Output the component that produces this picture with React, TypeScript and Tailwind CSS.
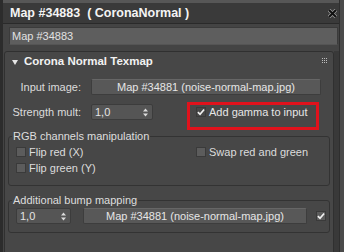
import type { ReactNode } from "react";

function CheckMark() {
  return (
    <svg width="9" height="8" viewBox="0 0 9 8" className="block">
      <path d="M1 4.2 L3.4 6.6 L8 1.2" fill="none" stroke="#f2f2f2" strokeWidth="1.9" />
    </svg>
  );
}

function CheckBox({ checked = false, dark = false }: { checked?: boolean; dark?: boolean }) {
  return (
    <div
      className={`flex h-[10px] w-[10px] shrink-0 items-center justify-center border border-[#3a3a3a] ${dark ? "bg-[#474747]" : "bg-[#5c5c5c]"}`}
    >
      {checked && <CheckMark />}
    </div>
  );
}

function Spinner({ value, width }: { value: string; width: string }) {
  return (
    <div
      className={`flex h-[16px] ${width} items-center justify-between rounded-[2px] border border-[#3c3c3c] bg-[#555555] pl-[3px] pr-[4px] text-[#e4e4e4]`}
    >
      <span>{value}</span>
      <svg width="5" height="9" viewBox="0 0 5 9" className="block">
        <path d="M0 3.5 L2.5 0.5 L5 3.5 Z M0 5.5 L2.5 8.5 L5 5.5 Z" fill="#dcdcdc" />
      </svg>
    </div>
  );
}

function MapButton({ width }: { width: string }) {
  return (
    <div
      className={`flex h-[16px] ${width} items-center justify-center rounded-[2px] border border-[#3d3d3d] border-t-[#666] bg-[#585858] text-[#e6e6e6]`}
    >
      Map #34881 (noise-normal-map.jpg)
    </div>
  );
}

function Group({ title, children, className = "" }: { title: string; children: ReactNode; className?: string }) {
  return (
    <fieldset className={`mx-[3px] rounded-[3px] border border-[#333333] ${className}`}>
      <legend className="ml-[3px] px-[1px] leading-[13px] text-[#dedede]">{title}</legend>
      {children}
    </fieldset>
  );
}

export default function App() {
  return (
    <div className="flex h-[252px] w-[344px] overflow-hidden bg-[#4a4a4a] font-['Liberation_Sans',Arial,sans-serif] text-[11px] text-[#dcdcdc]">
      <div className="flex w-[339px] shrink-0 flex-col border-l-[3px] border-[#2c2c2c] bg-[#444444]">
        <div className="h-[3px] shrink-0 bg-[#575757]" />
        <div className="flex h-[21px] shrink-0 items-center justify-between border-b border-[#2a2a2a] bg-[#3a3a3a] pl-[7px] pr-[2px]">
          <span className="text-[12.5px] font-bold text-[#f4f4f4]">Map #34883&nbsp;&nbsp;( CoronaNormal )</span>
          <svg width="9" height="9" viewBox="0 0 9 9" className="block">
            <path d="M1 1 L8 8 M8 1 L1 8" stroke="#9a9a9a" strokeWidth="3.6" />
            <path d="M1 1 L8 8 M8 1 L1 8" stroke="#111" strokeWidth="2" />
          </svg>
        </div>

        <div className="ml-[6px] mr-[1px] mt-[3px] flex h-[18px] shrink-0 items-center border border-[#3b3b3b] border-b-[#555] bg-[#5e5e5e] pl-[2px] text-[#e2e2e2]">
          Map #34883
        </div>

        <div className="mt-[6px] flex min-h-0 flex-1 overflow-hidden">
          <div className="ml-[1px] flex-1">
            <div className="relative h-[230px] rounded-[3px] border border-[#303030] bg-[#474747]">
              <div className="flex h-[20px] items-center pl-[7px]">
                <svg width="6" height="5" viewBox="0 0 6 5" className="block">
                  <path d="M0 0 L6 0 L3 5 Z" fill="#e6e6e6" />
                </svg>
                <span className="ml-[6px] text-[11.5px] font-bold text-[#f2f2f2]">Corona Normal Texmap</span>
              </div>
              <div className="absolute right-[6px] top-[6px] grid grid-cols-3 gap-[1px]">
                {Array.from({ length: 9 }).map((_, i) => (
                  <div key={i} className="h-[1px] w-[1px] bg-[#bdbdbd]" />
                ))}
              </div>

              <div className="mt-[7px] flex h-[16px] items-center">
                <div className="w-[76px] text-right">Input image:</div>
                <div className="ml-[10px]">
                  <MapButton width="w-[230px]" />
                </div>
              </div>

              <div className="relative mt-[9px] flex h-[16px] items-center">
                <div className="w-[76px] text-right">Strength mult:</div>
                <div className="ml-[10px]">
                  <Spinner value="1,0" width="w-[62px]" />
                </div>
                <div className="ml-[43px] flex items-center gap-[3px]">
                  <CheckBox checked dark />
                  <span className="text-[#e6e6e6]">Add gamma to input</span>
                </div>
                <div className="absolute left-[182px] top-[-2px] h-[28px] w-[132px] border-[3px] border-[#e0121c]" />
              </div>

              <Group title="RGB channels manipulation" className="mt-[10px] pb-[9px]">
                <div className="mt-[1px] flex">
                  <div className="flex w-[187px] flex-col pl-[7px]">
                    <div className="flex h-[16px] items-center gap-[3px]">
                      <CheckBox />
                      <span>Flip red (X)</span>
                    </div>
                    <div className="flex h-[16px] items-center gap-[3px]">
                      <CheckBox />
                      <span>Flip green (Y)</span>
                    </div>
                  </div>
                  <div className="flex h-[16px] items-center gap-[3px]">
                    <CheckBox />
                    <span>Swap red and green</span>
                  </div>
                </div>
              </Group>

              <Group title="Additional bump mapping" className="mt-[8px] pb-[8px]">
                <div className="mt-[1px] flex items-center pl-[7px]">
                  <Spinner value="1,0" width="w-[55px]" />
                  <div className="ml-[12px]">
                    <MapButton width="w-[224px]" />
                  </div>
                  <div className="ml-[9px]">
                    <CheckBox checked />
                  </div>
                </div>
              </Group>
            </div>
          </div>
          <div className="w-[5px] shrink-0 bg-[#393939]" />
        </div>
      </div>
      <div className="flex-1 border-l border-[#2e2e2e] bg-[#4a4a4a]" />
    </div>
  );
}
